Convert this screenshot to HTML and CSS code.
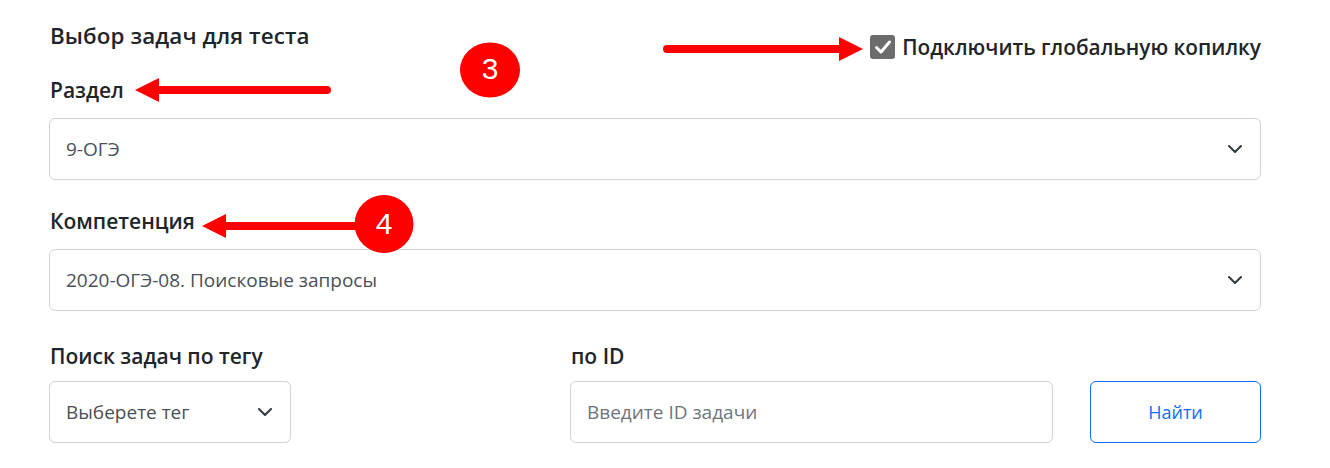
FILE: index.html
```html
<!DOCTYPE html>
<html lang="ru">
<head>
<meta charset="utf-8">
<title>Выбор задач для теста</title>
<link rel="stylesheet" href="styles.css">
</head>
<body>
<div class="panel">
  <div class="head">
    <h2 class="title">Выбор задач для теста</h2>
    <label class="check">
      <span class="box"><svg width="18" height="16" viewBox="0 0 18 16"><path d="M2.5 8.5 L7 13 L15.5 3" fill="none" stroke="#fff" stroke-width="3" stroke-linecap="round" stroke-linejoin="round"/></svg></span>
      <span class="check-text">Подключить глобальную копилку</span>
    </label>
  </div>

  <div class="field">
    <div class="label">Раздел</div>
    <div class="select"><span class="value">9-ОГЭ</span><svg class="chev" width="14" height="8" viewBox="0 0 14 8"><path d="M1 1 L7 7 L13 1" fill="none" stroke="#343a40" stroke-width="2" stroke-linecap="round" stroke-linejoin="round"/></svg></div>
  </div>

  <div class="field">
    <div class="label">Компетенция</div>
    <div class="select"><span class="value">2020-ОГЭ-08. Поисковые запросы</span><svg class="chev" width="14" height="8" viewBox="0 0 14 8"><path d="M1 1 L7 7 L13 1" fill="none" stroke="#343a40" stroke-width="2" stroke-linecap="round" stroke-linejoin="round"/></svg></div>
  </div>

  <div class="search-row">
    <div class="col-tag">
      <div class="label">Поиск задач по тегу</div>
      <div class="select"><span class="value">Выберете тег</span><svg class="chev" width="14" height="8" viewBox="0 0 14 8"><path d="M1 1 L7 7 L13 1" fill="none" stroke="#343a40" stroke-width="2" stroke-linecap="round" stroke-linejoin="round"/></svg></div>
    </div>
    <div class="col-id">
      <div class="label">по ID</div>
      <div class="id-row">
        <div class="input"><span class="placeholder">Введите ID задачи</span></div>
        <button class="btn">Найти</button>
      </div>
    </div>
  </div>
</div>

<svg class="annot" width="1330" height="468" viewBox="0 0 1330 468">
  <g fill="#ff0000" stroke="#ff0000">
    <line x1="327" y1="90" x2="156" y2="90" stroke-width="8" stroke-linecap="round"/>
    <polygon points="135,90 159,78 159,102" stroke="none"/>
    <line x1="667" y1="49" x2="842" y2="49" stroke-width="8" stroke-linecap="round"/>
    <polygon points="863,49 839,37 839,61" stroke="none"/>
    <line x1="370" y1="226" x2="222" y2="226" stroke-width="8" stroke-linecap="round"/>
    <polygon points="202,226 226,214 226,238" stroke="none"/>
    <ellipse cx="490" cy="70" rx="30" ry="27.5" stroke="none"/>
    <ellipse cx="384" cy="224" rx="29.5" ry="29" stroke="none"/>
  </g>
  <text x="490" y="79" class="num">3</text>
  <text x="384" y="234" class="num">4</text>
</svg>
</body>
</html>
```

FILE: styles.css
```css
html, body {
  margin: 0;
  padding: 0;
  background: #ffffff;
}
body {
  font-family: "Open Sans", "Noto Sans", sans-serif;
  color: #212529;
  position: relative;
  width: 1330px;
  height: 468px;
  overflow: hidden;
}
.panel {
  width: 1212px;
  padding: 21px 0 0 49px;
}
.head {
  display: flex;
  justify-content: space-between;
  align-items: flex-start;
  height: 30px;
}
.title {
  margin: 0 0 0 1px;
  font-size: 22.4px;
  font-weight: 600;
  line-height: 30px;
  letter-spacing: 0.1px;
}
.check {
  display: flex;
  align-items: center;
  gap: 7px;
  margin-top: 14px;
}
.box {
  width: 25px;
  height: 24px;
  background: #6c6c6c;
  border-radius: 3px;
  display: flex;
  align-items: center;
  justify-content: center;
}
.check-text {
  font-size: 20.8px;
  font-weight: 600;
  line-height: 24px;
}
.field {
  margin-top: 24px;
}
.field + .field {
  margin-top: 26px;
}
.label {
  font-size: 21px;
  font-weight: 600;
  line-height: 30px;
  margin: 0 0 13px 1px;
}
.select, .input {
  box-sizing: border-box;
  height: 62px;
  border: 1px solid #ced4da;
  border-radius: 6px;
  display: flex;
  align-items: center;
  justify-content: space-between;
  padding: 0 18px 0 16px;
  background: #fff;
}
.value, .placeholder {
  font-size: 19px;
  color: #495057;
}
.placeholder {
  color: #6c757d;
}
.search-row {
  display: flex;
  margin-top: 30px;
}
.search-row .label {
  margin-bottom: 10px;
}
.col-tag {
  width: 242px;
}
.col-id {
  margin-left: 279px;
  flex: 1;
}
.id-row {
  display: flex;
  gap: 37px;
}
.input {
  width: 483px;
}
.btn {
  box-sizing: border-box;
  width: 171px;
  height: 62px;
  border: 1px solid #0d6efd;
  border-radius: 6px;
  background: #fff;
  color: #0d6efd;
  font-family: "Open Sans", "Noto Sans", sans-serif;
  font-size: 18px;
}
.annot {
  position: absolute;
  left: 0;
  top: 0;
  pointer-events: none;
}
.num {
  font-family: "Liberation Sans", Arial, sans-serif;
  font-size: 30px;
  fill: #ffffff;
  text-anchor: middle;
}
```
